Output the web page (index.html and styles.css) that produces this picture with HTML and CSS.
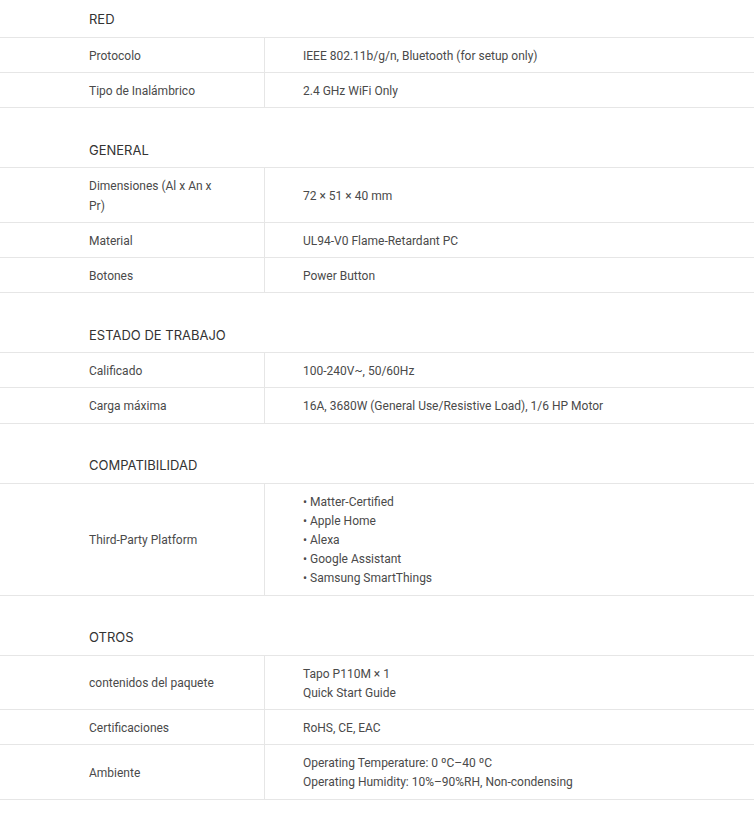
FILE: index.html
```html
<!DOCTYPE html>
<html lang="es">
<head>
<meta charset="utf-8">
<link rel="stylesheet" href="styles.css">
</head>
<body>
<div class="specs">
  <section class="group">
    <h3 class="group-title">RED</h3>
    <div class="row"><div class="k">Protocolo</div><div class="v">IEEE 802.11b/g/n, Bluetooth (for setup only)</div></div>
    <div class="row"><div class="k">Tipo de Inalámbrico</div><div class="v">2.4 GHz WiFi Only</div></div>
  </section>
  <section class="group">
    <h3 class="group-title">GENERAL</h3>
    <div class="row"><div class="k">Dimensiones (Al x An x Pr)</div><div class="v">72 × 51 × 40 mm</div></div>
    <div class="row"><div class="k">Material</div><div class="v">UL94-V0 Flame-Retardant PC</div></div>
    <div class="row"><div class="k">Botones</div><div class="v">Power Button</div></div>
  </section>
  <section class="group">
    <h3 class="group-title">ESTADO DE TRABAJO</h3>
    <div class="row"><div class="k">Calificado</div><div class="v">100-240V~, 50/60Hz</div></div>
    <div class="row"><div class="k">Carga máxima</div><div class="v">16A, 3680W (General Use/Resistive Load), 1/6 HP Motor</div></div>
  </section>
  <section class="group">
    <h3 class="group-title">COMPATIBILIDAD</h3>
    <div class="row"><div class="k">Third-Party Platform</div><div class="v">• Matter-Certified<br>• Apple Home<br>• Alexa<br>• Google Assistant<br>• Samsung SmartThings</div></div>
  </section>
  <section class="group">
    <h3 class="group-title">OTROS</h3>
    <div class="row"><div class="k">contenidos del paquete</div><div class="v">Tapo P110M × 1<br>Quick Start Guide</div></div>
    <div class="row"><div class="k">Certificaciones</div><div class="v">RoHS, CE, EAC</div></div>
    <div class="row"><div class="k">Ambiente</div><div class="v">Operating Temperature: 0 ºC–40 ºC<br>Operating Humidity: 10%–90%RH, Non-condensing</div></div>
  </section>
</div>
</body>
</html>
```
FILE: styles.css
```css
html, body {
  margin: 0;
  padding: 0;
  background: #fff;
}
body {
  font-family: Roboto, Inter, "Noto Sans", "Liberation Sans", sans-serif;
  color: #4a4a4a;
}
.specs {
  display: flex;
  flex-direction: column;
}
.group + .group {
  margin-top: 22px;
}
.group + .group .group-title {
  padding-top: 2px;
}
.group-title {
  margin: 0;
  height: 38px;
  display: flex;
  align-items: center;
  padding-left: 89px;
  font-family: Inter, "Noto Sans", sans-serif;
  font-size: 13px;
  font-weight: 400;
  color: #333;
  border-bottom: 1px solid #e6e6e6;
  box-sizing: border-box;
}
.row {
  display: flex;
  border-bottom: 1px solid #e6e6e6;
  font-size: 12px;
  line-height: 19.2px;
}
.k {
  width: 265px;
  flex: none;
  box-sizing: border-box;
  padding: 9px 40px 6px 89px;
  border-right: 1px solid #e6e6e6;
  display: flex;
  align-items: center;
}
.v {
  flex: 1;
  padding: 9px 20px 6px 38px;
  display: flex;
  flex-direction: column;
  justify-content: center;
}
```
